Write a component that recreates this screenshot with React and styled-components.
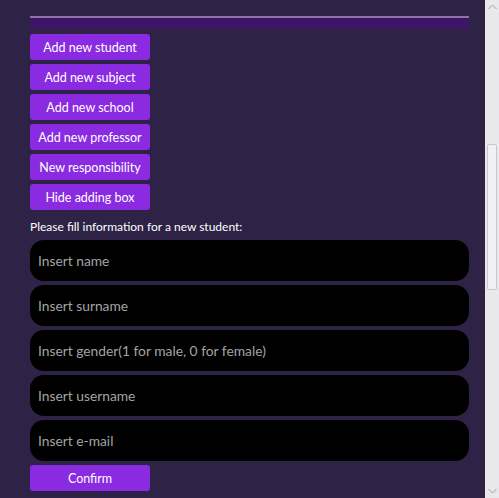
import React from "react";
import styled, { createGlobalStyle } from "styled-components";

const GlobalStyle = createGlobalStyle`
    html, body {
        margin: 0;
        padding: 0;
        background: #2e2346;
        overflow: hidden;
    }
    body {
        font-family: Lato, "Noto Sans", sans-serif;
    }
`;

const buttons = [
    "Add new student",
    "Add new subject",
    "Add new school",
    "Add new professor",
    "New responsibility",
    "Hide adding box",
];

const fields = [
    "Insert name",
    "Insert surname",
    "Insert gender(1 for male, 0 for female)",
    "Insert username",
    "Insert e-mail",
];

const App = () => {
    return (
        <>
            <GlobalStyle />
            <Page>
                <Main>
                    <TopBar />
                    <ButtonList>
                        {buttons.map((b) => (
                            <PurpleButton key={b}>{b}</PurpleButton>
                        ))}
                    </ButtonList>
                    <Label>Please fill information for a new student:</Label>
                    <Form>
                        {fields.map((f) => (
                            <Field key={f} placeholder={f} />
                        ))}
                        <PurpleButton>Confirm</PurpleButton>
                    </Form>
                </Main>
                <ScrollBar>
                    <Arrow>
                        <svg width="9" height="6" viewBox="0 0 9 6">
                            <path d="M0.5 5 L4.5 1 L8.5 5" fill="none" stroke="#a0a0a0" strokeWidth="1" />
                        </svg>
                    </Arrow>
                    <Track>
                        <Thumb />
                    </Track>
                    <Arrow>
                        <svg width="9" height="6" viewBox="0 0 9 6">
                            <path d="M0.5 1 L4.5 5 L8.5 1" fill="none" stroke="#a0a0a0" strokeWidth="1" />
                        </svg>
                    </Arrow>
                </ScrollBar>
            </Page>
        </>
    );
};

const Page = styled.div`
    display: flex;
    height: 498px;
    width: 499px;
`;

const Main = styled.div`
    flex: 1;
    padding: 16px 16px 0 30px;
    display: flex;
    flex-direction: column;
`;

const TopBar = styled.div`
    height: 11px;
    background: #3d1468;
    border-top: 2px solid #8c74a8;
`;

const ButtonList = styled.div`
    display: flex;
    flex-direction: column;
    gap: 4px;
    margin-top: 5px;
`;

const PurpleButton = styled.button`
    width: 120px;
    height: 26px;
    padding: 0;
    border: none;
    border-radius: 3px;
    background: #8a2be2;
    color: #fff;
    font-family: inherit;
    font-size: 12.5px;
    cursor: pointer;
`;

const Label = styled.div`
    color: #fff;
    font-size: 12px;
    margin-top: 9px;
    line-height: 16px;
`;

const Form = styled.div`
    display: flex;
    flex-direction: column;
    gap: 4px;
    margin-top: 5px;
`;

const Field = styled.input`
    height: 41px;
    box-sizing: border-box;
    border: none;
    border-radius: 14px;
    background: #000;
    color: #fff;
    padding: 0 8px;
    font-family: inherit;
    font-size: 13.8px;
    outline: none;
    &::placeholder {
        color: #a4a4a4;
    }
`;

const ScrollBar = styled.div`
    width: 14px;
    background: #e9e9ec;
    display: flex;
    flex-direction: column;
`;

const Arrow = styled.div`
    height: 14px;
    display: flex;
    align-items: center;
    justify-content: center;
`;

const Track = styled.div`
    flex: 1;
    padding-top: 130px;
`;

const Thumb = styled.div`
    margin: 0 2px;
    height: 146px;
    box-sizing: border-box;
    border: 1px solid #c8c8cc;
    border-radius: 2px;
    background: #f1f1f3;
`;

export default App;
